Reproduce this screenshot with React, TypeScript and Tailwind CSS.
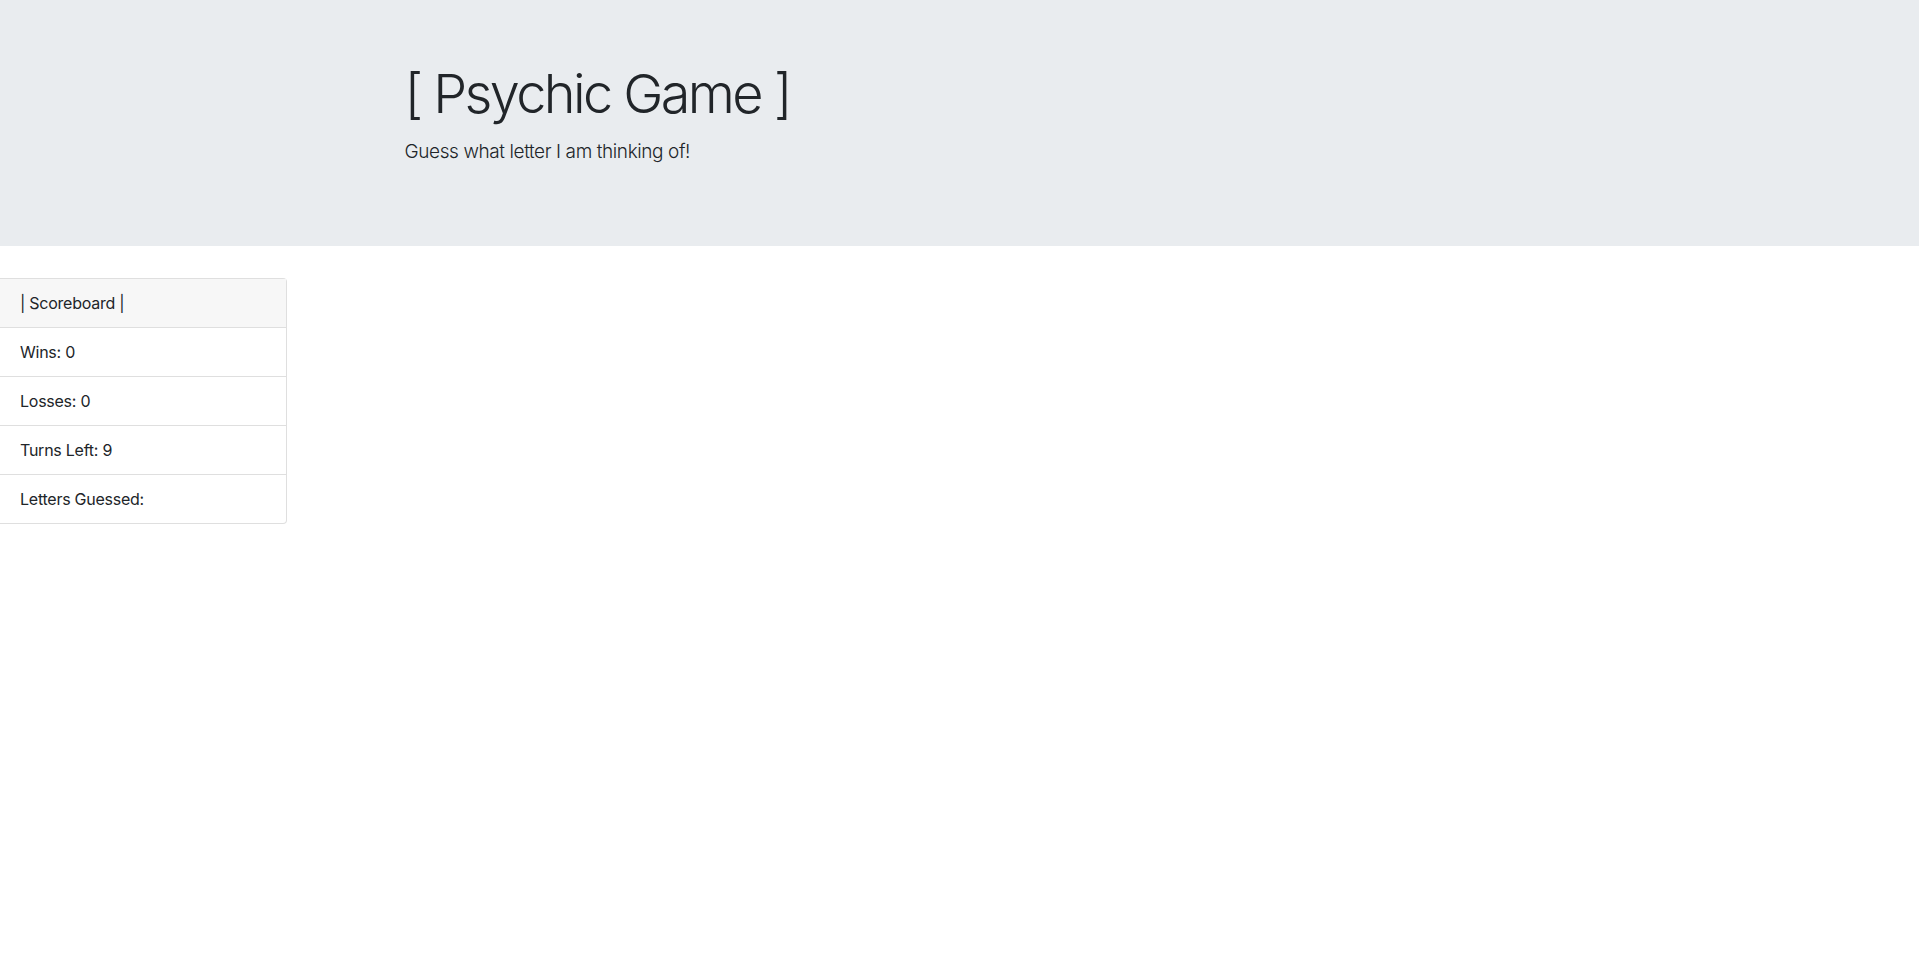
const rows = ["Wins: 0", "Losses: 0", "Turns Left: 9", "Letters Guessed:"];

export default function App() {
  return (
    <div className="min-h-screen bg-white text-[#212529] font-['Inter','Liberation_Sans',sans-serif]">
      <header className="bg-[#e9ecef] h-[246px] pt-[62px]">
        <div className="w-[1140px] mx-auto px-[15px]">
          <h1 className="text-[54px] font-light leading-[1.2] tracking-[-2.6px] mb-[11px]">
            [ Psychic Game ]
          </h1>
          <p className="text-[19px] font-light leading-[1.5] tracking-[-0.4px]">
            Guess what letter I am thinking of!
          </p>
        </div>
      </header>

      <div className="mt-8 w-[287px] border border-[#dfdfdf] rounded-r-[4px] border-l-0 text-[16px] leading-6 tracking-[-0.25px]">
        <div className="bg-[#f7f7f7] px-5 py-3 border-b border-[#dfdfdf]">| Scoreboard |</div>
        {rows.map((r, i) => (
          <div
            key={r}
            className={`px-5 py-3 ${i < rows.length - 1 ? "border-b border-[#dfdfdf]" : ""}`}
          >
            {r}
          </div>
        ))}
      </div>
    </div>
  );
}
